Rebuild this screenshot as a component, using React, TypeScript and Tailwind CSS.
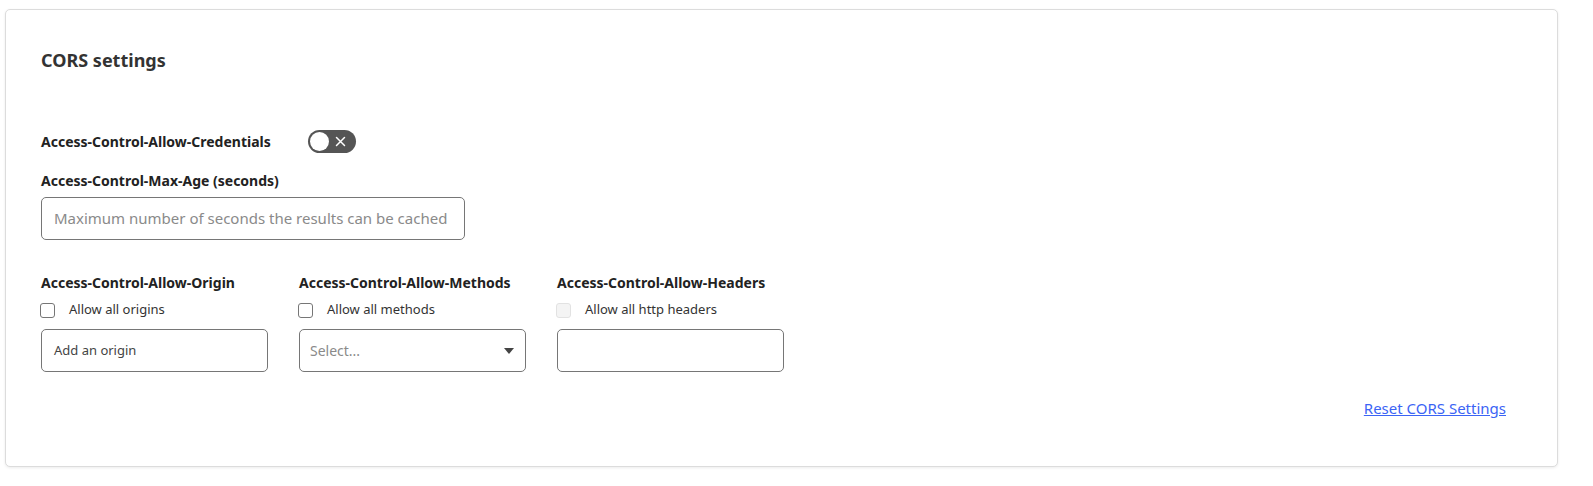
import React from 'react';

const font = { fontFamily: '"Noto Sans", "Open Sans", Arial, sans-serif' };

const Checkbox: React.FC<{ label: string; disabled?: boolean }> = ({ label, disabled }) => (
  <label className="flex items-center h-[20px] text-[13px] text-[#333]">
    <span
      className={
        disabled
          ? 'w-[15px] h-[15px] rounded-[3px] border border-[#e2e2e2] bg-[#f4f4f4] mr-[14px] ml-[-1px]'
          : 'w-[15px] h-[15px] rounded-[3px] border border-[#767676] bg-white mr-[14px] ml-[-1px]'
      }
    />
    {label}
  </label>
);

const Column: React.FC<{ title: string; check: string; disabled?: boolean; children: React.ReactNode }> = ({
  title,
  check,
  disabled,
  children,
}) => (
  <div className="w-[227px] flex flex-col">
    <div className="text-[14px] font-bold text-[#222] leading-[20px]">{title}</div>
    <div className="mt-[7px]">
      <Checkbox label={check} disabled={disabled} />
    </div>
    <div className="mt-[9px]">{children}</div>
  </div>
);

export default function App() {
  return (
    <div className="bg-white w-[1593px] h-[486px] pt-[9px] pl-[5px]" style={font}>
      <div className="w-[1553px] h-[458px] bg-white border border-[#dcdcdc] rounded-[5px] shadow-[0_1px_3px_rgba(0,0,0,0.08)] px-[35px] pt-[37px] flex flex-col">
        <h2 className="text-[18px] font-bold text-[#333] leading-[26px]">CORS settings</h2>

        <div className="mt-[56px] flex items-center h-[24px]">
          <span className="text-[14px] font-bold text-[#222] w-[267px]">Access-Control-Allow-Credentials</span>
          <span className="relative w-[48px] h-[23px] rounded-full bg-[#555] flex items-center">
            <span className="absolute left-[2px] top-[2px] w-[19px] h-[19px] rounded-full bg-white" />
            <svg className="absolute left-[27px] top-[6px]" width="11" height="11" viewBox="0 0 11 11">
              <path d="M1.5 1.5 L9.5 9.5 M9.5 1.5 L1.5 9.5" stroke="#fff" strokeWidth="1.5" strokeLinecap="round" />
            </svg>
          </span>
        </div>

        <div className="mt-[18px] text-[14px] font-bold text-[#222] leading-[20px]">Access-Control-Max-Age (seconds)</div>
        <div className="mt-[6px] w-[424px] h-[43px] border border-[#767676] rounded-[5px] flex items-center px-[12px] text-[15px] text-[#8a8a8a] whitespace-nowrap overflow-hidden">
          Maximum number of seconds the results can be cached
        </div>

        <div className="mt-[33px] flex gap-[31px]">
          <Column title="Access-Control-Allow-Origin" check="Allow all origins">
            <div className="h-[43px] border border-[#767676] rounded-[5px] flex items-center px-[12px] text-[13px] text-[#444]">
              Add an origin
            </div>
          </Column>
          <Column title="Access-Control-Allow-Methods" check="Allow all methods">
            <div className="h-[43px] border border-[#767676] rounded-[5px] flex items-center justify-between pl-[10px] pr-[11px] text-[14px] text-[#8a8a8a]">
              Select...
              <svg width="10" height="6" viewBox="0 0 10 6">
                <path d="M0 0 L10 0 L5 6 Z" fill="#444" />
              </svg>
            </div>
          </Column>
          <Column title="Access-Control-Allow-Headers" check="Allow all http headers" disabled>
            <div className="h-[43px] border border-[#767676] rounded-[5px]" />
          </Column>
        </div>

        <div className="mt-[26px] flex justify-end pr-[16px]">
          <a href="#" className="text-[15px] text-[#3b64f5] underline leading-[20px]">
            Reset CORS Settings
          </a>
        </div>
      </div>
    </div>
  );
}
